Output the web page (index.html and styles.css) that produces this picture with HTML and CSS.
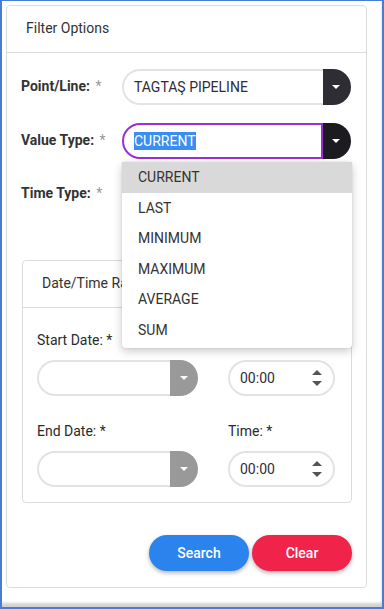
FILE: index.html
```html
<!DOCTYPE html>
<html lang="en">
<head>
<meta charset="UTF-8" />
<meta name="viewport" content="width=device-width, initial-scale=1" />
<title>Filter Options</title>
<link rel="stylesheet" href="styles.css">
</head>
<body>
<div class="window">
  <div class="card">
    <div class="card-header">Filter Options</div>
    <div class="card-body">

      <div class="field">
        <label class="field-label">Point/Line: <span class="req">*</span></label>
        <div class="select">
          <div class="select-value">TAGTAŞ PIPELINE</div>
          <div class="select-btn"><span class="caret"></span></div>
        </div>
      </div>

      <div class="field">
        <label class="field-label">Value Type: <span class="req">*</span></label>
        <div class="select focused">
          <div class="select-value"><span class="sel">CURRENT</span></div>
          <div class="select-btn"><span class="caret"></span></div>
          <ul class="dropdown">
            <li class="active">CURRENT</li>
            <li>LAST</li>
            <li>MINIMUM</li>
            <li>MAXIMUM</li>
            <li>AVERAGE</li>
            <li>SUM</li>
          </ul>
        </div>
      </div>

      <div class="field">
        <label class="field-label">Time Type: <span class="req">*</span></label>
        <div class="select">
          <div class="select-value"></div>
          <div class="select-btn"><span class="caret"></span></div>
        </div>
      </div>

      <div class="subcard">
        <div class="subcard-header">Date/Time Range</div>
        <div class="subcard-body">
          <div class="dt-row">
            <div>
              <div class="dt-label">Start Date: *</div>
              <div class="date-input">
                <div class="date-value"></div>
                <div class="date-btn"><span class="caret"></span></div>
              </div>
            </div>
            <div>
              <div class="dt-label">&nbsp;</div>
              <div class="time-input">
                <span>00:00</span>
                <span class="spin"><i class="up"></i><i class="down"></i></span>
              </div>
            </div>
          </div>
          <div class="dt-row">
            <div>
              <div class="dt-label">End Date: *</div>
              <div class="date-input">
                <div class="date-value"></div>
                <div class="date-btn"><span class="caret"></span></div>
              </div>
            </div>
            <div>
              <div class="dt-label">Time: *</div>
              <div class="time-input">
                <span>00:00</span>
                <span class="spin"><i class="up"></i><i class="down"></i></span>
              </div>
            </div>
          </div>
        </div>
      </div>

      <div class="actions">
        <button class="btn btn-search">Search</button>
        <button class="btn btn-clear">Clear</button>
      </div>

    </div>
  </div>
</div>
</body>
</html>
```

FILE: styles.css
```css
* { box-sizing: border-box; }
html, body {
  margin: 0;
  padding: 0;
}
body {
  font-family: Roboto, 'Liberation Sans', sans-serif;
  font-size: 14px;
  color: #333;
  background: #fff;
}
.window {
  height: 609px;
  border-style: solid;
  border-color: #4a7dd2;
  border-width: 1px 2px 2px 2px;
  padding: 4px 0 0 4px;
  background: #fff;
  box-shadow: inset -2px -6px 3px -2px #d2d2d2;
  overflow: hidden;
}
.card {
  width: 361px;
  border: 1px solid #dcdcdc;
  border-radius: 4px;
  background: #fff;
}
.card-header {
  padding: 12px 19px 13px;
  line-height: 21px;
  border-bottom: 1px solid #dcdcdc;
  color: #333;
}
.card-body {
  padding: 16px 14px 16px 14px;
}
.field {
  display: grid;
  grid-template-columns: 101px 229px;
  align-items: center;
  margin-bottom: 18px;
}
.field:nth-child(3) { margin-bottom: 47px; }
.field-label {
  font-weight: 700;
  color: #333;
  margin-top: -2px;
}
.field:nth-child(3) .field-label { margin-top: -4px; }
.req {
  color: #999;
  font-weight: 400;
  margin-left: 2px;
}
.select {
  position: relative;
  display: flex;
  height: 36px;
}
.select-value {
  flex: 1;
  border: 2px solid #e3e3e3;
  border-right: none;
  border-radius: 18px 0 0 18px;
  padding-left: 10px;
  line-height: 32px;
  color: #2f2b3a;
  white-space: nowrap;
  overflow: hidden;
}
.select-btn {
  width: 28px;
  background: #2e2d33;
  border-radius: 0 18px 18px 0;
  display: flex;
  align-items: center;
  justify-content: center;
  padding-right: 2px;
}
.caret {
  width: 0;
  height: 0;
  border-left: 4px solid transparent;
  border-right: 4px solid transparent;
  border-top: 4px solid #fff;
}
.focused .select-value {
  border: 2px solid #9a2fd6;
  border-radius: 18px 0 0 18px;
}
.focused .select-btn { background: #1c1b20; }
.sel {
  background: #3a8ef2;
  color: #fff;
  padding: 1px 0;
}
.dropdown {
  position: absolute;
  top: 39px;
  left: 0;
  width: 230px;
  margin: 0;
  padding: 0 0 3px;
  list-style: none;
  background: #fff;
  border-radius: 3px;
  box-shadow: 0 3px 10px rgba(0,0,0,0.22), 0 0 1px rgba(0,0,0,0.3);
  z-index: 5;
}
.dropdown li {
  line-height: 30.5px;
  padding-left: 16px;
  color: #333;
}
.dropdown li.active { background: #d9d9d9; }

.subcard {
  border: 1px solid #dcdcdc;
  border-radius: 4px;
  margin-left: 1px;
}
.subcard-header {
  padding: 12px 19px 13px;
  line-height: 21px;
  border-bottom: 1px solid #dcdcdc;
  color: #333;
}
.subcard-body {
  padding: 22px 15px 15px 14px;
}
.dt-row {
  display: grid;
  grid-template-columns: 161px 107px;
  column-gap: 30px;
}
.dt-row + .dt-row { margin-top: 25px; }
.dt-label {
  line-height: 20px;
  margin-bottom: 10px;
  color: #2a2a2a;
}
.date-input {
  display: flex;
  height: 36px;
}
.date-value {
  flex: 1;
  border: 2px solid #e3e3e3;
  border-right: none;
  border-radius: 18px 0 0 18px;
}
.date-btn {
  width: 28px;
  background: #999;
  border-radius: 0 18px 18px 0;
  display: flex;
  align-items: center;
  justify-content: center;
}
.time-input {
  height: 36px;
  border: 2px solid #e3e3e3;
  border-radius: 18px;
  display: flex;
  align-items: center;
  justify-content: space-between;
  padding: 0 10px 0 10px;
  color: #2f2b3a;
}
.spin {
  display: flex;
  flex-direction: column;
  gap: 6px;
  margin-right: 1px;
}
.spin i {
  display: block;
  width: 0;
  height: 0;
  border-left: 5px solid transparent;
  border-right: 5px solid transparent;
}
.spin .up { border-bottom: 5px solid #555; }
.spin .down { border-top: 5px solid #555; }

.actions {
  display: flex;
  justify-content: flex-end;
  gap: 3px;
  margin-top: 32px;
}
.btn {
  width: 100px;
  height: 36px;
  border: none;
  border-radius: 18px;
  color: #fff;
  font-family: Roboto, 'Liberation Sans', sans-serif;
  font-size: 14px;
  font-weight: 500;
  box-shadow: 0 2px 4px rgba(0,0,0,0.3);
  cursor: pointer;
}
.btn-search { background: #2b84ee; }
.btn-clear { background: #f0234b; }
```
